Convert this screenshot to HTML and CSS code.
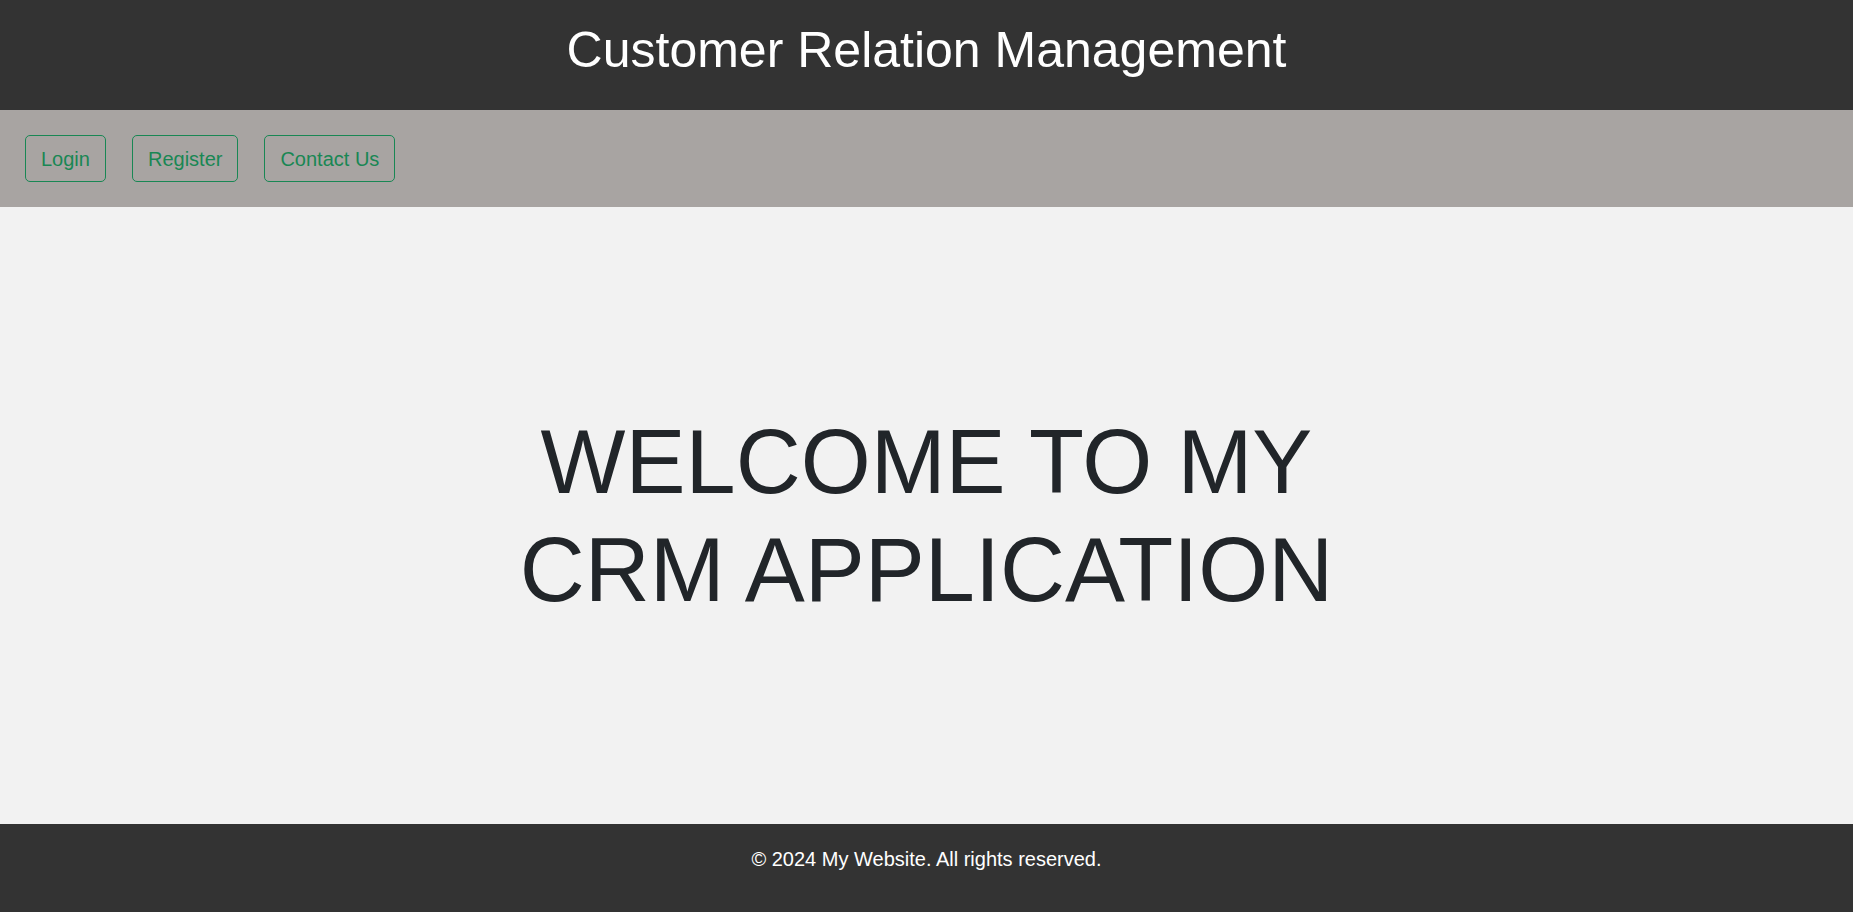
FILE: index.html
```html
<!DOCTYPE html>
<html lang="en">
<head>
<meta charset="utf-8">
<title>Customer Relation Management</title>
<link rel="stylesheet" href="styles.css">
</head>
<body>
<div class="page">
  <header class="site-header">
    <h1 class="site-title">Customer Relation Management</h1>
  </header>
  <nav class="site-nav">
    <a class="nav-btn" href="#">Login</a>
    <a class="nav-btn" href="#">Register</a>
    <a class="nav-btn" href="#">Contact Us</a>
  </nav>
  <main class="site-main">
    <h2 class="welcome">WELCOME TO MY CRM APPLICATION</h2>
  </main>
  <footer class="site-footer">
    <p class="footer-text">&copy; 2024 My Website. All rights reserved.</p>
  </footer>
</div>
</body>
</html>
```
FILE: styles.css
```css
* {
  box-sizing: border-box;
}

html, body {
  margin: 0;
  padding: 0;
}

body {
  font-family: "Liberation Sans", Arial, sans-serif;
  color: #212529;
  background: #f2f2f2;
}

.page {
  display: flex;
  flex-direction: column;
  min-height: 100vh;
}

.site-header {
  background: #333333;
  height: 110px;
  padding-top: 20px;
  text-align: center;
}

.site-title {
  margin: 0;
  font-size: 50px;
  font-weight: 400;
  line-height: 60px;
  color: #ffffff;
}

.site-nav {
  background: #a8a4a2;
  height: 97px;
  padding: 25px;
  display: flex;
  align-items: flex-start;
  gap: 26px;
}

.nav-btn {
  display: inline-block;
  font-size: 20px;
  line-height: 30px;
  padding: 7.5px 15px;
  color: #198754;
  border: 1px solid #198754;
  border-radius: 5px;
  text-decoration: none;
  background: transparent;
}

.site-main {
  flex: 1;
  display: flex;
  align-items: center;
  justify-content: center;
  background: #f2f2f2;
}

.welcome {
  margin: 0;
  max-width: 900px;
  font-size: 90px;
  font-weight: 400;
  line-height: 1.2;
  text-align: center;
  color: #212529;
}

.site-footer {
  background: #333333;
  height: 88px;
  padding-top: 20px;
  text-align: center;
}

.footer-text {
  margin: 0;
  font-size: 20px;
  line-height: 30px;
  color: #ffffff;
}
```
